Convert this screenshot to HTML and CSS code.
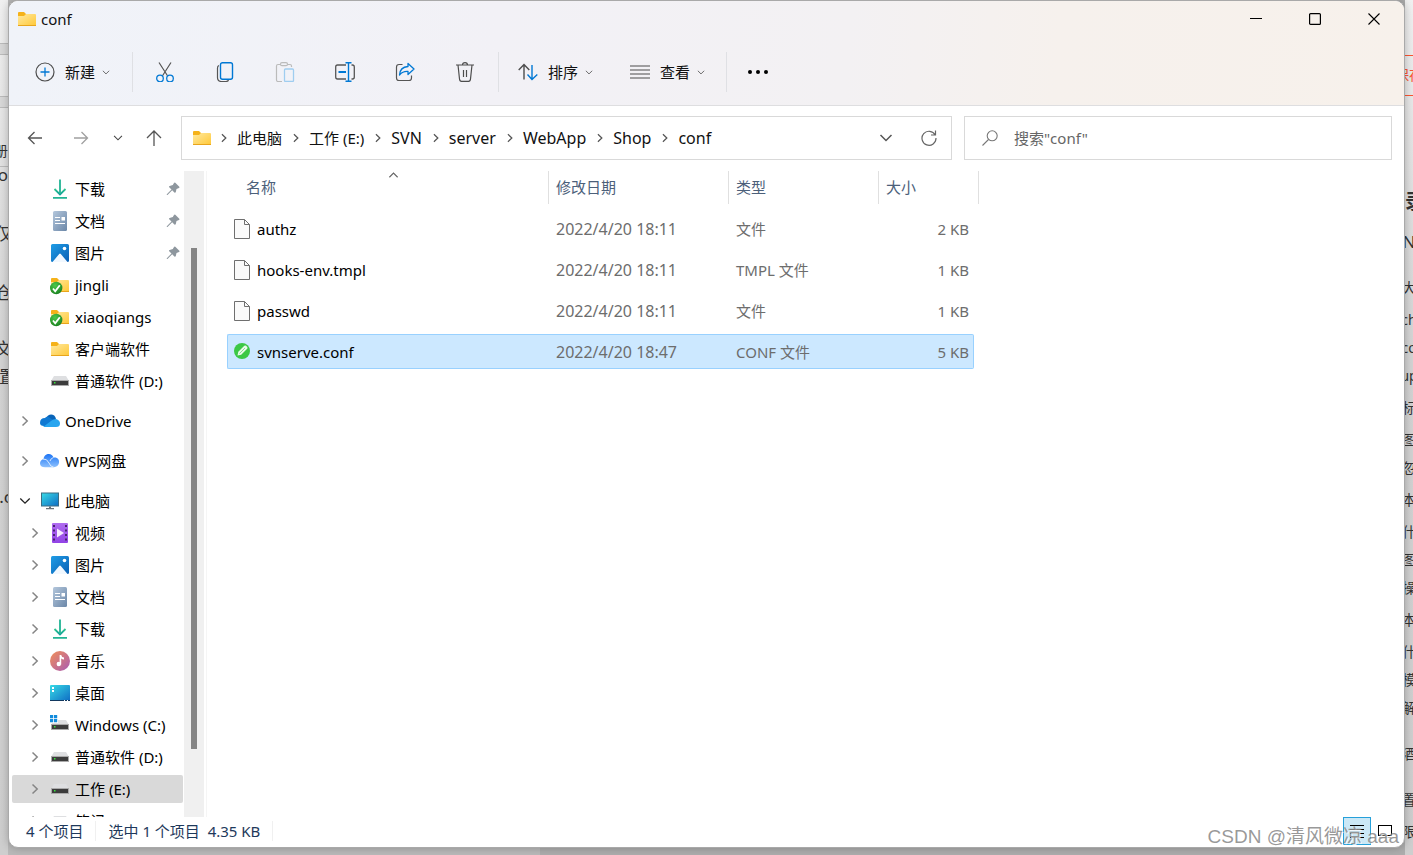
FILE: index.html
```html
<!DOCTYPE html>
<html lang="zh-CN">
<head>
<meta charset="utf-8">
<title>conf</title>
<link rel="stylesheet" href="styles.css">
</head>
<body>
<svg class="defs" aria-hidden="true">
  <defs>
    <linearGradient id="gFolder" x1="0" y1="0" x2="1" y2="1"><stop offset="0" stop-color="#ffe9a0"/><stop offset="1" stop-color="#ffc837"/></linearGradient>
    <linearGradient id="gDown" x1="0" y1="0" x2="0" y2="1"><stop offset="0" stop-color="#2fc48d"/><stop offset="1" stop-color="#0f9f9c"/></linearGradient>
    <linearGradient id="gDoc" x1="0" y1="0" x2="1" y2="1"><stop offset="0" stop-color="#b4c7dc"/><stop offset="1" stop-color="#6b87a8"/></linearGradient>
    <linearGradient id="gPic" x1="0" y1="0" x2="1" y2="1"><stop offset="0" stop-color="#1f9de6"/><stop offset="1" stop-color="#0a5fb4"/></linearGradient>
    <linearGradient id="gScreen" x1="0" y1="0" x2="1" y2="1"><stop offset="0" stop-color="#37dbe6"/><stop offset="1" stop-color="#0f6cc4"/></linearGradient>
    <linearGradient id="gVideo" x1="0" y1="0" x2="0" y2="1"><stop offset="0" stop-color="#b06cf0"/><stop offset="1" stop-color="#9243e6"/></linearGradient>
    <linearGradient id="gMusic" x1="0" y1="0" x2="1" y2="1"><stop offset="0" stop-color="#f29058"/><stop offset="1" stop-color="#a85ab4"/></linearGradient>
    <linearGradient id="gWps" x1="0" y1="0" x2="0" y2="1"><stop offset="0" stop-color="#1b74f5"/><stop offset="1" stop-color="#8cc0fd"/></linearGradient>
    <radialGradient id="gTick" cx=".4" cy=".3" r=".8"><stop offset="0" stop-color="#4cc94a"/><stop offset="1" stop-color="#157a1c"/></radialGradient>
  </defs>
  <symbol id="folder" viewBox="0 0 20 20"><path d="M1 4q0-1 1-1h5l2 2v3H1z" fill="#f5b21a"/><path d="M1 7h6l2-2h9q1 0 1 1v10q0 1-1 1H2q-1 0-1-1z" fill="url(#gFolder)"/><path d="M1 16.500h18" stroke="#e8a51c"/></symbol>
  <symbol id="svnfolder" viewBox="0 0 20 20"><use href="#folder"/><circle cx="6.200" cy="13" r="6.200" fill="url(#gTick)"/><path d="M3 13.500l2.200 2.700 4.600-6" fill="none" stroke="#fff" stroke-width="1.800"/></symbol>
  <symbol id="download" viewBox="0 0 20 20"><path d="M4.500 10l5.500 5.500L15.500 10" fill="none" stroke="url(#gDown)" stroke-width="1.800"/><path d="M9.100 .5h1.800v14.500H9.100zM3 18h14v1.800H3z" fill="#22b394"/></symbol>
  <symbol id="document" viewBox="0 0 20 20"><rect x="3" width="14" height="20" rx="1.500" fill="url(#gDoc)"/><path d="M5 6.500h5M5 9.500h5M5 12.500h10" stroke="#fff" stroke-width="1.200"/><path d="M11.500 6h3.500v3.500h-3.500z" fill="#fff"/></symbol>
  <symbol id="picture" viewBox="0 0 20 20"><rect x="1" y="1" width="18" height="18" rx="1.500" fill="url(#gPic)"/><path d="M2.500 19l6.700-8q.8-1 1.600 0l6.700 8z" fill="#f1f8ff"/><circle cx="14.500" cy="5.500" r="1.800" fill="#fff"/></symbol>
  <symbol id="drive" viewBox="0 0 20 20"><path d="M4 5h12l3 5H1z" fill="#dedfe1"/><path d="M1 9h18v6H1z" fill="#3c3c3c"/><path d="M1 9.500h18M1 14.500h18M1.500 9v6M18.500 9v6" stroke="#aaa"/><path d="M4 11h1.500v1.500H4z" fill="#35e63b"/></symbol>
  <symbol id="windrive" viewBox="0 0 20 20"><use href="#drive"/><path d="M0 0h8v8H0z" fill="#fff"/><path d="M0 0h3.200v3.200H0zM4 0h3.200v3.200H4zM0 4h3.200v3.200H0zM4 4h3.200v3.200H4z" fill="#128bdc"/></symbol>
  <symbol id="onedrive" viewBox="0 0 20 20"><path d="M6 7.500C8 2 15 2.500 16 8l-5 5z" fill="#0864b8"/><path d="M0 12q0-5 5-5 2-2.500 5 0l7 4-5 4H4q-4 0-4-3z" fill="#1079d2"/><path d="M3 16l8-6q2-2 5-2 4 1 4 4.500t-4 3.500z" fill="#28a5ef"/></symbol>
  <symbol id="wps" viewBox="0 0 20 20"><path d="M3.500 8C4 2 12 1 13.500 6.500 18 6 19.500 9 19 12q-1 4-5 4.200H5Q0 16 0 12.500 0 9 3.500 8z" fill="url(#gWps)"/><path d="M3 8q4-.5 6 4 1.500 4 4.500 4M10 10q1-3 3.500-3.500" fill="none" stroke="#d8eaff"/></symbol>
  <symbol id="pc" viewBox="0 0 20 20"><rect x="1.500" y="2" width="17" height="13" fill="url(#gScreen)" stroke="#3c6d83"/><path d="M9 15.500h2v2H9zM6 17h8v1.200H6z" fill="#6a7278"/></symbol>
  <symbol id="video" viewBox="0 0 20 20"><rect x="2" width="16" height="20" rx="1" fill="url(#gVideo)"/><path d="M4 2v17M16 2v17" stroke="#472470" stroke-width="2" stroke-dasharray="2 2.500"/><path d="M7 5.500l7 4.500-7 4.500z" fill="#f5eafe"/></symbol>
  <symbol id="music" viewBox="0 0 20 20"><circle cx="10" cy="10" r="10" fill="url(#gMusic)"/><circle cx="8.800" cy="13" r="2.200" fill="#fff"/><path d="M9.600 4h1.600q.5 2.500 2.800 2.500v2q-1.600 0-2.800-1v6H9.600z" fill="#fff"/></symbol>
  <symbol id="desktop" viewBox="0 0 20 20"><rect y="2" width="20" height="16" rx="1" fill="url(#gScreen)"/><path d="M2 4h2v2H2zM2 7h2v2H2z" fill="#fff"/><path d="M0 17.500h20" stroke="#12385f"/><path d="M14 17.500h1M17 17.500h1" stroke="#fff"/></symbol>
  <symbol id="pin" viewBox="0 0 14 14"><path d="M8 1q.6-.8 1.300-.2l4 4q.6.8-.3 1.200L10.500 7 9.800 10q-.5 1.200-1.400.5L6.200 8.300 1.500 13H.8v-.8L5.500 7.500 3.200 5.300q-.6-.8.4-1.200L6.800 3z" fill="#8e979e"/></symbol>
  <symbol id="right" viewBox="0 0 8 12"><path d="M1.500 1.500L6.200 6l-4.700 4.500" fill="none" stroke="currentColor" stroke-width="1.500"/></symbol>
  <symbol id="down" viewBox="0 0 14 8"><path d="M1.500 1l5.500 5.500L12.500 1" fill="none" stroke="currentColor" stroke-width="1.500"/></symbol>
  <symbol id="file" viewBox="0 0 16 20"><path d="M.5.500h10l5 5v14H.5z" fill="#fafafa" stroke="#6f6f6f"/><path d="M10.500.500v5h5" fill="none" stroke="#6f6f6f"/></symbol>
  <symbol id="conf" viewBox="0 0 16 20"><circle cx="8" cy="9" r="8" fill="#3cc845"/><path d="M3.500 13.500l.8-3.700 6-6q1-.8 1.800 0l1.100 1.100q.8.900 0 1.800l-6 6z" fill="#e9fae9"/><path d="M5.500 11.500l5.500-5.500" stroke="#8edb93"/></symbol>
</svg>

<main class="screen">
  <ul class="behind behind-left" aria-hidden="true">
    <li class="bar bar-top"></li><li class="bar bar-mid"></li>
    <li class="small">册</li><li class="o">o</li><li class="far">仅</li><li class="far">个仓</li><li class="mid">文</li><li>配置</li><li class="last">.c</li>
  </ul>

  <section class="window">
    <header class="head">
      <div class="titlebar">
        <svg class="i20"><use href="#folder"/></svg>
        <h1>conf</h1>
        <button class="caption" aria-label="最小化"><svg width="12" height="12"><path d="M0 5.500h12" stroke="#000"/></svg></button>
        <button class="caption" aria-label="最大化"><svg width="12" height="12"><rect x=".6" y=".6" width="10.800" height="10.800" rx="1" fill="none" stroke="#000" stroke-width="1.200"/></svg></button>
        <button class="caption" aria-label="关闭"><svg width="12" height="12"><path d="M.5.500l11 11M11.500.500l-11 11" stroke="#000" stroke-width="1.100"/></svg></button>
      </div>
      <div class="toolbar">
        <button class="tool new">
          <svg class="i20" fill="none"><circle cx="10" cy="10" r="9" stroke="#4d4d4d" stroke-width="1.200"/><path d="M10 5.500v9M5.500 10h9" stroke="#0078d4" stroke-width="1.300"/></svg>
          <span>新建</span><svg class="tiny"><use href="#down"/></svg>
        </button>
        <i class="sep"></i>
        <div class="icons">
          <button aria-label="剪切"><svg class="i20" fill="none"><path d="M4 .5l8.500 13.200M16 .5L7.500 13.700" stroke="#555" stroke-width="1.200"/><g stroke="#0078d4" stroke-width="1.300"><circle cx="5" cy="16.500" r="3.300"/><circle cx="15" cy="16.500" r="3.300"/></g></svg></button>
          <button aria-label="复制"><svg class="i20" fill="none"><path d="M4 3.500Q2.500 4 2.500 6v9.500q0 4 4 4H11q2 0 2.500-1.500" stroke="#555" stroke-width="1.200"/><rect x="5.500" y=".7" width="12" height="16.500" rx="2" stroke="#0078d4" stroke-width="1.400"/></svg></button>
          <button aria-label="粘贴"><svg class="i20" fill="none"><path d="M6 2.500H3Q1.500 2.500 1.500 4v14q0 1.500 1.500 1.500h4M12 2.500h3q1.500 0 1.500 1.500v1" stroke="#bbb" stroke-width="1.200"/><rect x="5.500" y=".7" width="7" height="3" rx="1.500" stroke="#bbb" stroke-width="1.200"/><rect x="9.500" y="7" width="9" height="12.500" rx="1" stroke="#9fcdf0" stroke-width="1.300"/></svg></button>
          <button aria-label="重命名"><svg class="i20" fill="none"><path d="M11 3H2.500Q.7 3 .7 5v10q0 2 1.800 2H11M16.500 3h1q1.800 0 1.800 2v10q0 2-1.800 2h-1" stroke="#555" stroke-width="1.300"/><path d="M13.500 1v18M10.500.700h6M10.500 19.300h6" stroke="#0078d4" stroke-width="1.400"/><path d="M3.500 10h7.500" stroke="#0078d4" stroke-width="2"/></svg></button>
          <button aria-label="共享"><svg class="i20" fill="none"><path d="M7.500 2.500H4Q1.500 2.500 1.500 5v11q0 2.500 2.500 2.500h10q2.500 0 2.500-2.500v-2.500" stroke="#555" stroke-width="1.200"/><path d="M13 1.500l6 5.500-6 5.500V9.500Q8 9 4.500 13 5 5 13 4.500z" stroke="#0078d4" stroke-width="1.300" stroke-linejoin="round"/></svg></button>
          <button aria-label="删除"><svg class="i20" fill="none" stroke="#4d4d4d" stroke-width="1.200"><path d="M1 3h18M3 3l1.500 14q.2 2.300 2 2.300h7q1.800 0 2-2.300L17 3M7.500 3Q7.500.700 10 .7T12.500 3M8.500 8v7M11.500 8v7"/></svg></button>
        </div>
        <i class="sep"></i>
        <button class="tool sort">
          <svg class="i20" fill="none" stroke-width="1.400"><path d="M6 17.500V3M.7 8L6 2.500 11.300 8" stroke="#4d4d4d"/><path d="M14 3v14.500M9.500 12.500L14 17.500l5.300-5" stroke="#0078d4"/></svg>
          <span>排序</span><svg class="tiny"><use href="#down"/></svg>
        </button>
        <button class="tool view">
          <svg class="i20" stroke="#4d4d4d" stroke-width="1.200"><path d="M0 4h20M0 8h20M0 12h20M0 16h20"/></svg>
          <span>查看</span><svg class="tiny"><use href="#down"/></svg>
        </button>
        <i class="sep"></i>
        <button class="more" aria-label="更多"><svg class="i20"><circle cx="2" cy="10" r="2"/><circle cx="10" cy="10" r="2"/><circle cx="18" cy="10" r="2"/></svg></button>
      </div>
    </header>

    <nav class="navbar">
      <div class="history">
        <button aria-label="后退"><svg class="i16" fill="none" stroke="#555" stroke-width="1.300"><path d="M15 8H1.500M7.500 2L1.500 8l6 6"/></svg></button>
        <button aria-label="前进"><svg class="i16" fill="none" stroke="#a0a0a0" stroke-width="1.300"><path d="M1 8h13.500M8.500 2l6 6-6 6"/></svg></button>
        <button aria-label="最近"><svg class="recent"><use href="#down"/></svg></button>
        <button aria-label="向上"><svg class="i16" fill="none" stroke="#555" stroke-width="1.300"><path d="M8 16V1M1 8l7-7 7 7"/></svg></button>
      </div>
      <div class="address">
        <svg class="i20"><use href="#folder"/></svg>
        <svg class="crumb"><use href="#right"/></svg><button>此电脑</button>
        <svg class="crumb"><use href="#right"/></svg><button>工作 (E:)</button>
        <svg class="crumb"><use href="#right"/></svg><button class="dir">SVN</button>
        <svg class="crumb"><use href="#right"/></svg><button class="dir">server</button>
        <svg class="crumb"><use href="#right"/></svg><button class="dir">WebApp</button>
        <svg class="crumb"><use href="#right"/></svg><button class="dir">Shop</button>
        <svg class="crumb"><use href="#right"/></svg><button class="dir">conf</button>
        <button class="drop" aria-label="历史路径"><svg width="14" height="8"><use href="#down"/></svg></button>
        <button class="refresh" aria-label="刷新"><svg width="16" height="16" fill="none" stroke="#666" stroke-width="1.200"><path d="M14.200 5A7 7 0 1 0 15 8M14.500 .5v4.500h-4.500"/></svg></button>
      </div>
      <label class="search">
        <svg width="16" height="16" fill="none" stroke="#777" stroke-width="1.100"><circle cx="10.200" cy="5.800" r="5"/><path d="M6.500 9.500L.5 15.500"/></svg>
        <input type="text" aria-label="搜索" placeholder="搜索&quot;conf&quot;">
      </label>
    </nav>

    <div class="body">
      <aside class="side">
        <ul class="tree">
          <li class="sub"><svg class="i20"><use href="#download"/></svg><a href="#">下载</a><svg class="pin"><use href="#pin"/></svg></li>
          <li class="sub"><svg class="i20"><use href="#document"/></svg><a href="#">文档</a><svg class="pin"><use href="#pin"/></svg></li>
          <li class="sub"><svg class="i20"><use href="#picture"/></svg><a href="#">图片</a><svg class="pin"><use href="#pin"/></svg></li>
          <li class="sub"><svg class="i20"><use href="#svnfolder"/></svg><a href="#">jingli</a></li>
          <li class="sub"><svg class="i20"><use href="#svnfolder"/></svg><a href="#">xiaoqiangs</a></li>
          <li class="sub"><svg class="i20"><use href="#folder"/></svg><a href="#">客户端软件</a></li>
          <li class="sub"><svg class="i20"><use href="#drive"/></svg><a href="#">普通软件 (D:)</a></li>
          <li class="root"><svg class="arrow"><use href="#right"/></svg><svg class="i20"><use href="#onedrive"/></svg><a href="#">OneDrive</a></li>
          <li class="root"><svg class="arrow"><use href="#right"/></svg><svg class="i20"><use href="#wps"/></svg><a href="#">WPS网盘</a></li>
          <li class="root open"><svg class="arrow"><use href="#down"/></svg><svg class="i20"><use href="#pc"/></svg><a href="#">此电脑</a></li>
          <li class="sub"><svg class="arrow"><use href="#right"/></svg><svg class="i20"><use href="#video"/></svg><a href="#">视频</a></li>
          <li class="sub"><svg class="arrow"><use href="#right"/></svg><svg class="i20"><use href="#picture"/></svg><a href="#">图片</a></li>
          <li class="sub"><svg class="arrow"><use href="#right"/></svg><svg class="i20"><use href="#document"/></svg><a href="#">文档</a></li>
          <li class="sub"><svg class="arrow"><use href="#right"/></svg><svg class="i20"><use href="#download"/></svg><a href="#">下载</a></li>
          <li class="sub"><svg class="arrow"><use href="#right"/></svg><svg class="i20"><use href="#music"/></svg><a href="#">音乐</a></li>
          <li class="sub"><svg class="arrow"><use href="#right"/></svg><svg class="i20"><use href="#desktop"/></svg><a href="#">桌面</a></li>
          <li class="sub"><svg class="arrow"><use href="#right"/></svg><svg class="i20"><use href="#windrive"/></svg><a href="#">Windows (C:)</a></li>
          <li class="sub"><svg class="arrow"><use href="#right"/></svg><svg class="i20"><use href="#drive"/></svg><a href="#">普通软件 (D:)</a></li>
          <li class="sub current"><svg class="arrow"><use href="#right"/></svg><svg class="i20"><use href="#drive"/></svg><a href="#">工作 (E:)</a></li>
          <li class="sub"><svg class="arrow"><use href="#right"/></svg><svg class="i20"><use href="#drive"/></svg><a href="#">笔记 (F:)</a></li>
        </ul>
        <div class="scroll"><div class="thumb"></div></div>
      </aside>
      <div class="files">
        <table>
          <colgroup><col class="c-name"><col class="c-date"><col class="c-type"><col class="c-size"></colgroup>
          <thead><tr><th>名称<svg class="sortmark"><use href="#down"/></svg></th><th>修改日期</th><th>类型</th><th>大小</th></tr></thead>
          <tbody>
            <tr><td><span class="name"><svg><use href="#file"/></svg>authz</span></td><td class="date">2022/4/20 18:11</td><td>文件</td><td>2 KB</td></tr>
            <tr><td><span class="name"><svg><use href="#file"/></svg>hooks-env.tmpl</span></td><td class="date">2022/4/20 18:11</td><td>TMPL 文件</td><td>1 KB</td></tr>
            <tr><td><span class="name"><svg><use href="#file"/></svg>passwd</span></td><td class="date">2022/4/20 18:11</td><td>文件</td><td>1 KB</td></tr>
            <tr class="selected"><td><span class="name"><svg><use href="#conf"/></svg>svnserve.conf</span></td><td class="date">2022/4/20 18:47</td><td>CONF 文件</td><td>5 KB</td></tr>
          </tbody>
        </table>
      </div>
    </div>

    <footer class="status">
      <span>4 个项目</span><span>选中 1 个项目&nbsp; 4.35 KB</span>
      <button class="layout on" aria-label="详细信息"><svg width="14" height="14" stroke="#000"><path d="M0 1.500h14M0 5.500h14M0 9.500h14M0 13.500h14"/></svg></button>
      <button class="layout" aria-label="大图标"><svg width="14" height="14" fill="none" stroke="#000"><rect x=".5" y="1.500" width="13" height="10"/><path d="M1 13.500h12" stroke="#bbb"/></svg></button>
    </footer>
  </section>

  <ul class="behind behind-right" aria-hidden="true">
    <li class="save">保存</li><li class="heading">录</li><li class="latin">N</li>
    <li>大</li><li class="wide">ch</li><li>co</li><li>up</li><li class="wide">标</li><li class="wide">图</li><li>忽</li><li class="wide">本</li><li class="wide">什</li><li>图</li><li>操</li><li class="wide">本</li><li class="wide">什</li><li>模</li><li>解</li><li class="block">酒</li><li class="block">置</li><li class="wide">限</li>
  </ul>
  <p class="watermark">CSDN @清风微凉 aaa</p>
</main>
</body>
</html>
```

FILE: styles.css
```css
* { box-sizing: border-box; }
body {
  margin: 0;
  font: 15px/20px "Noto Sans", "Noto Sans CJK SC", sans-serif;
  color: #111;
}
ul { margin: 0; padding: 0; list-style: none; }
svg { display: block; flex: none; }
button {
  display: flex; align-items: center; justify-content: center;
  margin: 0; padding: 0; border: 0; background: none;
  font: inherit; color: inherit;
}
a { color: inherit; text-decoration: none; white-space: nowrap; }
.defs { position: absolute; width: 0; height: 0; }
.i20 { width: 20px; height: 20px; }
.i16 { width: 16px; height: 16px; }
.tiny { width: 8px; height: 5px; color: #555; }
.recent { width: 10px; height: 6px; color: #444; }

/* desktop behind the window */
.screen {
  position: relative;
  display: grid;
  grid-template-columns: 8px minmax(0, 1fr) 8px;
  grid-template-rows: minmax(0, 1fr);
  height: 100vh;
  padding-bottom: 7px;
  overflow: hidden;
  background: linear-gradient(90deg, #b9b9b9 540px, #adadad 540px);
}
.behind {
  display: flex; flex-direction: column;
  height: 100vh; overflow: hidden;
  background: linear-gradient(#f0f0f0, #e2e2e2 160px, #d3d3d3 360px, #cecece);
  color: #333; font-size: 14px; line-height: 28px;
}
.behind li { flex: none; height: 28px; white-space: nowrap; display: flex; }
.behind-left li { justify-content: flex-end; font-size: 17px; }
.behind-left .bar { height: 12px; border: solid #bbb; border-width: 1px 0; background: #d8d8d8; }
.behind-left .bar-top { margin-top: 43px; }
.behind-left .bar-mid { margin-top: 41px; }
.behind-left .small { margin-top: 29px; font-size: 14px; height: 30px; border-bottom: 1px solid #bbb; }
.behind-left .o { margin-top: -6px; }
.behind-left .far { margin-top: 31px; margin-right: -4px; }
.behind-left .mid { margin-top: 28px; margin-right: -4px; }
.behind-left .mid + li { margin-right: -8px; }
.behind-left .last { margin-top: 92px; margin-right: -4px; }
.behind-right li { justify-content: center; }
.behind-right .wide { margin-top: 4px; }
.behind-right .block { margin-top: 18px; }
.behind-right .save {
  height: 41px; margin: 55px 0 92px; line-height: 38px; color: #fc5531;
  border: solid #fc5531; border-width: 1px 0;
}
.behind-right .heading { justify-content: flex-start; font-size: 20px; font-weight: 700; }
.behind-right .latin { margin: 12px 0 18px; font-size: 17px; }

/* window frame */
.window {
  display: flex; flex-direction: column; min-width: 0;
  border: 1px solid #a9a9a9; border-radius: 10px;
  overflow: hidden; background: #fff;
  box-shadow: 0 0 8px rgba(0, 0, 0, .25);
  z-index: 1;
}
.head {
  background: linear-gradient(95deg, #f0f3f9, #f2f1f6 35%, #f3f1f3 60%, #f6f1ed 75%, #f7f1eb);
  border-bottom: 1px solid #dedee0;
}
.titlebar { display: flex; align-items: center; height: 36px; padding: 0 1px 0 8px; }
h1 { flex: 1; margin: 0 0 0 4px; font-size: 15px; line-height: 20px; font-weight: 400; }
.caption { width: 59px; height: 36px; }

/* command bar */
.toolbar { display: flex; align-items: center; height: 68px; padding: 2px 0 0 26px; }
.tool > span { margin: 0 7px 0 10px; }
.sep { width: 1px; height: 40px; background: #dfe0e4; }
.new { margin-right: 22px; }
.icons { display: flex; margin: 0 3px 0 2px; }
.icons button { width: 60px; height: 40px; }
.sort { margin: 0 37px 0 19px; }
.view { margin-right: 21px; }
.more { margin-left: 21px; }

/* address and search */
.navbar { display: flex; padding: 10px 12px 11px 0; }
.history { display: grid; grid-template-columns: 52px 40px 34px 38px; width: 172px; flex: none; }
.address, .search {
  display: flex; align-items: center; min-width: 0; height: 44px;
  border: 1px solid #d9d9d9; background: #fff;
}
.address { flex: 1 1 771px; padding-left: 10px; white-space: nowrap; }
.address .i20 { margin-right: -2px; }
.dir { font-size: 16px; }
.crumb { width: 8px; height: 10px; margin: 0 9px 0 10px; color: #555; }
.drop { margin-left: auto; color: #555; }
.refresh { margin: 0 14px 0 28px; }
.search { flex: 1 1 428px; margin-left: 12px; padding-left: 17px; }
.search input {
  flex: 1; min-width: 0; margin-left: 16px; padding: 0;
  border: 0; outline: 0; background: none; font: inherit;
}
.search input::placeholder { color: #666; opacity: 1; }

/* folder tree */
.body { flex: 1; min-height: 0; display: flex; }
.side { display: flex; width: 198px; padding-right: 2px; border-right: 1px solid #f5f5f5; flex: none; }
.tree { flex: 1; min-width: 0; overflow: hidden; padding: 4px 1px 0 3px; }
.tree li { display: flex; align-items: center; height: 28px; margin-bottom: 4px; border-radius: 2px; color: #000; }
.tree a { margin-left: 5px; }
.tree .arrow { width: 8px; height: 12px; margin-right: 11px; color: #858585; }
.tree .sub { padding-left: 38px; }
.tree .sub:has(.arrow) { padding-left: 19px; }
.tree .root { margin: 12px 0; padding-left: 9px; }
.tree .open { padding-left: 7px; margin-bottom: 4px; }
.tree .open .arrow { width: 12px; height: 8px; margin-right: 9px; color: #222; }
.tree .current { background: #d9d9d9; }
.tree .pin { width: 14px; height: 14px; margin: 0 3px 0 auto; }
.scroll { width: 20px; padding-top: 77px; background: #f0f0f0; }
.thumb { width: 6px; height: 88%; margin-left: 7px; background: #858585; }

/* file list */
.files { flex: 1; min-width: 0; padding-left: 20px; }
table { width: 747px; table-layout: fixed; border-spacing: 0 6px; margin-top: -6px; }
.c-name { width: 321px; }
.c-date { width: 180px; }
.c-type { width: 150px; }
th {
  position: relative; height: 34px; padding: 0 8px 2px;
  text-align: left; font-weight: 400; color: #4c607a;
}
th:first-child { padding-left: 19px; }
th::after { content: ""; position: absolute; top: 0; right: -1px; width: 1px; height: 33px; background: #e0e0e0; }
th:last-child::after { right: -5px; }
.sortmark { position: absolute; top: 1px; left: 161px; width: 11px; height: 6px; color: #666; transform: rotate(180deg); }
td { height: 35px; padding: 0 8px; color: #6d6d6d; white-space: nowrap; border: 1px solid transparent; border-width: 1px 0; }
td:first-child { padding-left: 7px; color: #000; }
td:last-child { padding-right: 5px; text-align: right; }
.date { font-size: 16px; }
.name { display: flex; align-items: center; gap: 7px; }
.name svg { width: 16px; height: 20px; }
.selected td { background: #cce8ff; border-color: #99d1ff; }
.selected td:first-child { border-left-width: 1px; border-radius: 2px 0 0 2px; padding-left: 6px; }
.selected td:last-child { border-right-width: 1px; border-radius: 0 2px 2px 0; padding-right: 4px; }

/* status bar */
.status { display: flex; align-items: center; height: 30px; padding: 0 5px 2px 17px; color: #1e395b; }
.status span { padding-right: 12px; margin-right: 12px; border-right: 1px solid #f0f0f0; }
.layout { width: 28px; height: 28px; }
.layout.on { margin-left: auto; border: 1px solid #26a0da; background: #cbe8f6; }
.watermark {
  position: absolute; right: 14px; bottom: 6px; z-index: 2; margin: 0;
  font: 19px/24px "Liberation Sans", "Noto Sans CJK SC", sans-serif;
  color: rgba(135, 135, 135, .85); text-shadow: 1px 1px 0 rgba(255, 255, 255, .8);
  white-space: nowrap;
}
```
